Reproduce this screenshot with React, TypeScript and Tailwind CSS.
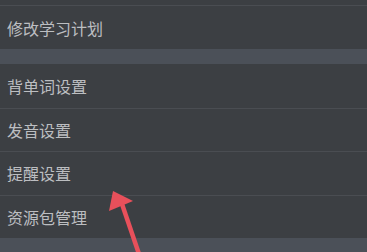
const rows = ['背单词设置', '发音设置', '提醒设置', '资源包管理']

function Row({ label, divider }: { label: string; divider?: boolean }) {
  return (
    <div className={`h-[43.5px] flex items-center pl-[7px] ${divider ? 'border-t border-[#4a4d52]' : ''}`}>
      <span className="text-[16px] leading-none text-[#bcbec1]">{label}</span>
    </div>
  )
}

export default function App() {
  return (
    <div
      className="relative w-[367px] h-[252px] overflow-hidden bg-[#3c3f43]"
      style={{ fontFamily: '"Noto Sans CJK SC", "Noto Sans", sans-serif' }}
    >
      <div className="h-[5px]" />
      <div className="h-[44px] border-t border-[#4a4d52] flex items-center pl-[7px]">
        <span className="text-[16px] leading-none text-[#bcbec1]">修改学习计划</span>
      </div>
      <div className="h-[15px] bg-[#4b5058]" />
      {rows.map((r, i) => (
        <Row key={r} label={r} divider={i > 0} />
      ))}
      <div className="h-[20px] bg-[#4b5058]" />

      {/* red arrow pointing at 提醒设置 */}
      <svg className="absolute left-0 top-0 pointer-events-none" width="367" height="252" viewBox="0 0 367 252">
        <line x1="122" y1="204" x2="139" y2="254" stroke="#e8505b" strokeWidth="4.5" />
        <polygon points="113,191 133,201 109,211" fill="#e8505b" />
      </svg>
    </div>
  )
}
